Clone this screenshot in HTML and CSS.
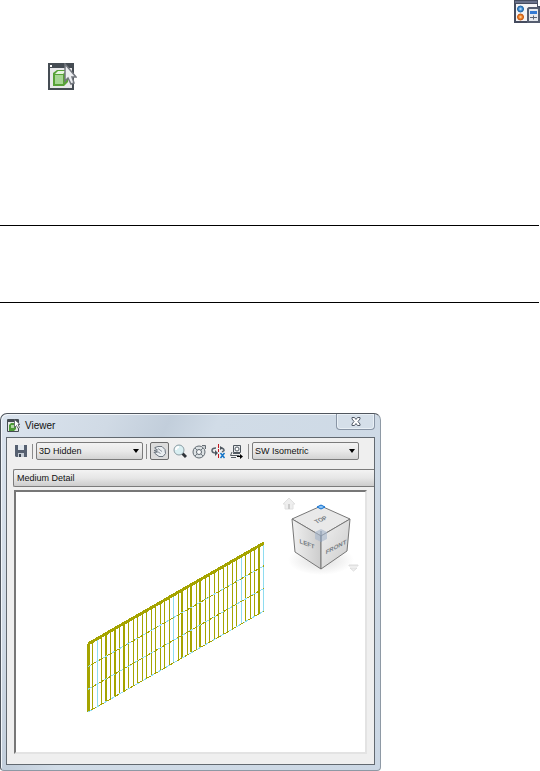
FILE: index.html
```
<!DOCTYPE html>
<html lang="en">
<head>
    <meta charset="UTF-8">
    <meta name="viewport" content="width=device-width, initial-scale=1.0">
    <title>Viewer</title>
    <link rel="stylesheet" href="styles.css">
</head>
<body>
    <div class="icon-row icon-row-right">
        <svg width="26" height="23" viewBox="0 0 26 23">
            <path d="M0 0h24v6h2v17H0z" fill="#454c5f"/>
            <rect x="1" y="1" width="22" height="2" fill="#69718a"/>
            <rect x="2" y="4" width="21" height="17" fill="#f4f4f6"/>
            <circle cx="6.500" cy="9" r="3" fill="#3f8fd8" stroke="#1f5f9c"/>
            <circle cx="6.500" cy="9" r="1.200" fill="#a8d0f2"/>
            <circle cx="6.500" cy="17" r="3" fill="#f08024" stroke="#c25410"/>
            <circle cx="6.500" cy="17" r="1.200" fill="#f9c48c"/>
            <path d="M15 8h9l1 1v13H14V9z" fill="#e6e9ee" stroke="#555d70" stroke-width="2"/>
            <rect x="16" y="11" width="7" height="3" fill="#3279d3"/>
            <path d="M16 17.500h7M19.500 15.500v4" stroke="#5c6475"/>
        </svg>
    </div>
    <div class="icon-row icon-row-left">
        <svg width="29" height="27" viewBox="0 0 29 27">
            <rect x="0" y="0" width="26" height="27" fill="#454c53"/>
            <rect x="2" y="2" width="2" height="2" fill="#fff"/>
            <rect x="2" y="5" width="22" height="20" fill="#e9e9eb"/>
            <path d="M5 10l4-3h11v12l-4 4H5z" fill="#58a237"/>
            <path d="M7 12h8v9H7z" fill="#a7d694"/>
            <path d="M7 11l3-3h8l-3 3z" fill="#e6f5df"/>
            <path d="M17 1v17l3-3 3 6 3-1-2-6h4z" fill="#eceef1" stroke="#74787f" stroke-width="1.500"/>
        </svg>
    </div>
    <hr class="rule">
    <hr class="rule rule-second">

    <div class="window">
        <div class="titlebar">
            <svg width="13" height="13" viewBox="0 0 13 13">
                <path d="M.5.500h11v12H.5z" fill="#e7ebe7" stroke="#454c53"/>
                <path d="M1 1h10v2H1z" fill="#454c53"/>
                <path d="M2 6l2-2h5v6l-2 2H2z" fill="#4d9b36"/>
                <path d="M4 6h3v3H4z" fill="#b1daa2"/>
                <path d="M7.500.500v8l2-2 1.500 3 1.500-1-1.500-3h2z" fill="#fff" stroke="#565b62" stroke-width=".8"/>
            </svg>
            <span class="title">Viewer</span>
            <button class="close" aria-label="Close">
                <svg width="10" height="9" viewBox="0 0 10 9">
                    <path d="M1 .5h2.500L5 2.500 6.500.500H9v1.500L7 4.500l2 2.500v1.500H6.500L5 6.500l-1.500 2H1V7l2-2.500L1 2z" fill="#fff" stroke="#535b68"/>
                </svg>
            </button>
        </div>

        <div class="client">
            <div class="toolbar">
                <button class="tool" aria-label="Save">
                    <svg width="12" height="12" viewBox="0 0 12 12">
                        <path d="M0 0h12v12H1l-1-1z" fill="#566070"/>
                        <path d="M3 0h6v5H3z" fill="#e1e7ed"/>
                        <path d="M3 8h6v4H3z" fill="#c7ced6"/>
                        <path d="M4 9h2v3H4z" fill="#3d4652"/>
                    </svg>
                </button>
                <span class="separator"></span>
                <div class="combo">
                    <select aria-label="Visual style">
                        <option>3D Hidden</option>
                    </select>
                </div>
                <span class="separator"></span>
                <button class="tool tool-active" aria-label="Pan">
                    <svg width="15" height="13" viewBox="0 0 15 13">
                        <path d="M3 2.500l3-1h4l3 3 .500 4-2.500 3H7L3 8.500 2 7.500l3.500-.5L2 5.500l3.500-.5L2.500 3z" fill="#e9edf0" stroke="#6c757f"/>
                        <path d="M6 3.500l4 3M5.500 6.500l3 2" stroke="#8b949d" fill="none"/>
                    </svg>
                </button>
                <button class="tool" aria-label="Zoom">
                    <svg width="14" height="15" viewBox="0 0 14 15">
                        <path d="M9 9l4 4" stroke="#30353a" stroke-width="3"/>
                        <circle cx="6" cy="6" r="5" fill="#d9eff2" stroke="#8b9ca3"/>
                        <path d="M3 6q0-3 3-3" stroke="#fff" stroke-width="2" fill="none"/>
                    </svg>
                </button>
                <button class="tool" aria-label="Steering wheel">
                    <svg width="15" height="15" viewBox="0 0 15 15">
                        <circle cx="7" cy="8" r="6" fill="#dde2e4" stroke="#626b72"/>
                        <path d="M3 4l2 2M11 4L9 6M3 12l2-2M11 12L9 10" stroke="#727b82"/>
                        <circle cx="7" cy="8" r="2.500" fill="#f7f8f9" stroke="#5d666e"/>
                        <path d="M10 1.500h3.500V5" fill="#c9ced2" stroke="#656d74"/>
                    </svg>
                </button>
                <button class="tool" aria-label="Orbit">
                    <svg width="15" height="15" viewBox="0 0 15 15">
                        <path d="M5 4Q1 4 1 6.500 1 9 5 9M9 4q4 0 4 2.500L11 8" fill="none" stroke="#59636c" stroke-width="1.500"/>
                        <path d="M4 6l3 3-3 3zM9 2v4l3-2z" fill="#4d565e"/>
                        <path d="M7.500 0v4M7.500 5v3M7.500 10v4" stroke="#c51720"/>
                        <path d="M9.500 9l4 5M13.500 9l-4 5" stroke="#1475c8" stroke-width="1.500"/>
                    </svg>
                </button>
                <button class="tool" aria-label="Camera">
                    <svg width="14" height="15" viewBox="0 0 14 15">
                        <path d="M3.500 1.500h7v7h-7z" fill="#e5e8ea" stroke="#4e565e"/>
                        <circle cx="7" cy="5" r="2" fill="#fff" stroke="#545d65"/>
                        <path d="M2 8L.5 11.500h9M3 9.500h7M1 13.500h5" fill="none" stroke="#545c63"/>
                        <path d="M7 12.500h5" stroke="#000"/>
                        <path d="M10 10l3 2.500L10 15z" fill="#000"/>
                    </svg>
                </button>
                <span class="separator"></span>
                <div class="combo">
                    <select aria-label="View">
                        <option>SW Isometric</option>
                    </select>
                </div>
            </div>

            <div class="detail">Medium Detail</div>

            <div class="viewport">
                <svg class="scene" viewBox="15 492 349 260">
                    <defs>
                        <linearGradient id="left" x2="1">
                            <stop offset="0" stop-color="#f0f0f0"/>
                            <stop offset="1" stop-color="#cccccc"/>
                        </linearGradient>
                        <linearGradient id="front" x2="1" y2="1">
                            <stop offset="0" stop-color="#f0f0f0"/>
                            <stop offset="1" stop-color="#cbcbcb"/>
                        </linearGradient>
                        <radialGradient id="shadow">
                            <stop offset="0" stop-color="#ddd"/>
                            <stop offset="1" stop-color="#fff"/>
                        </radialGradient>
                    </defs>

                    <!-- curtain wall panels -->
                    <g id="wall" fill="none" shape-rendering="crispEdges"></g>

                    <!-- home -->
                    <path d="M282 504l6-6 6 6h-2v5h-8v-5z" fill="#eee" stroke="#e0e0e0"/>
                    <path d="M287 504h2v5h-2z" fill="#ccc"/>

                    <!-- view cube -->
                    <ellipse cx="320" cy="560" rx="33" ry="15" fill="url(#shadow)"/>
                    <g stroke="#777" stroke-linejoin="round">
                        <path d="M291 519l29-13 29 13-29 17z" fill="#e9e9e9"/>
                        <path d="M291 519l29 17v33l-26-17z" fill="url(#left)"/>
                        <path d="M349 519l-29 17v33l26-18z" fill="url(#front)"/>
                    </g>
                    <path d="M314 532l6-3 6 3v7l-6 3-6-3z" fill="#a9b8cc" opacity=".65"/>
                    <path d="M320 531v11" stroke="#8090a5"/>
                    <path d="M316 507l4-2 4 2-4 2z" fill="#8cc4f5" stroke="#1270d0"/>
                    <g class="cube-text">
                        <text transform="translate(306 543) skewY(22)" y="3">LEFT</text>
                        <text transform="translate(335 546) skewY(-28)" y="3">FRONT</text>
                        <text transform="translate(319 519) rotate(-24) skewX(20)" y="3">TOP</text>
                    </g>

                    <path d="M348 565h9v1h-9zM349 568h7l-3.500 3z" fill="#eee" stroke="#ddd"/>
                </svg>
            </div>
        </div>
    </div>

<script>
    const wall = document.getElementById('wall');
    const left = 87, right = 262, top1 = 644, height = 68, rise = 101;
    const bays = 39;
    const thick = [4, 6, 8, 21, 23, 25, 38];
    const cyan = [2, 19, 34, 39];

    function line(d, color, width, dash) {
        const path = document.createElementNS('http://www.w3.org/2000/svg', 'path');
        path.setAttribute('d', d);
        path.setAttribute('stroke', color);
        path.setAttribute('stroke-width', width);
        if (dash) path.setAttribute('stroke-dasharray', dash);
        wall.appendChild(path);
    }

    // vertical mullions
    for (let i = 0; i <= bays; i++) {
        const x = Math.round(left + (right - left) * i / bays);
        const y = Math.round(top1 - rise * i / bays);
        const width = i === 0 ? 3 : thick.includes(i) ? 2 : 1;
        const middle = width === 2 ? x : x + 0.5;
        line(`M${middle} ${y}v${height}`, cyan.includes(i) ? '#8edcf0' : '#a5a400', width);
    }

    // rails
    for (let i = 0; i <= 3; i++) {
        const y = top1 + height * i / 3;
        const d = `M${left} ${y}L${right + 1} ${y - rise}`;
        line(d, '#a5a400', i === 0 ? 3 : 1);
        if (i > 0) line(d, '#8edcf0', 1, '4 5');
    }
</script>
</body>
</html>
```
FILE: styles.css
```
body {
    margin: 0;
    background: #fff;
    font-family: "Liberation Sans", Arial, sans-serif;
    font-size: 9px;
    color: #111;
}
svg {
    display: block;
    flex: none;
}
.icon-row {
    display: flex;
}
.icon-row-right {
    justify-content: flex-end;
}
.icon-row-left {
    padding: 40px 48px 0;
}
.rule {
    margin: 135px 1px 0 0;
    border: 0;
    border-top: 1px solid #000;
}
.rule-second {
    margin-top: 76px;
}

/* Window frame */
.window {
    box-sizing: border-box;
    max-width: 381px;
    margin-top: 110px;
    padding: 0 5px 5px;
    border: 1px solid #50565e;
    border-right-color: #8e99a5;
    border-bottom-color: #8e99a5;
    border-radius: 7px 7px 4px 4px;
    background: linear-gradient(115deg, #dbe4ee 0, #d0dae5 100px, #c2cedb 155px, #d1dce7 200px, #cbd7e4 100%);
    box-shadow: inset 1px 1px #f2f6fa;
}
.titlebar {
    display: flex;
    align-items: center;
    height: 23px;
    padding-left: 1px;
}
.title {
    flex: 1;
    padding-left: 5px;
    font-size: 10px;
}
.close {
    display: flex;
    align-self: flex-start;
    align-items: center;
    justify-content: center;
    width: 39px;
    height: 16px;
    padding: 0;
    border: 1px solid #8995a5;
    border-top: 0;
    border-radius: 0 0 4px 4px;
    background: #d5dfe9;
    box-shadow: inset 0 0 0 1px #e9f0f6;
}
.client {
    border: 1px solid #626970;
    background: #efefef;
}

/* Toolbar */
.toolbar {
    display: flex;
    align-items: center;
    gap: 3px;
    padding: 4px 6px 9px;
}
.tool {
    display: flex;
    align-items: center;
    justify-content: center;
    width: 16px;
    height: 18px;
    padding: 0;
    border: 0;
    background: none;
}
.tool-active {
    width: 19px;
    border: 1px solid #6b6b6b;
    border-radius: 2px;
    background: #dcdcdc;
}
.separator {
    width: 1px;
    height: 15px;
    background: #8b8b8b;
}
.combo {
    position: relative;
    flex: 0 1 107px;
}
.combo select {
    display: block;
    appearance: none;
    box-sizing: border-box;
    width: 100%;
    height: 18px;
    padding: 0 16px 0 2px;
    border: 1px solid #7b7b7b;
    border-radius: 2px;
    background: linear-gradient(#f3f3f3, #e9e9e9 50%, #d3d3d3);
    font: inherit;
    color: inherit;
}
.combo::after {
    content: "";
    position: absolute;
    top: 7px;
    right: 4px;
    border: 3px solid transparent;
    border-top: 4px solid #000;
    border-bottom: 0;
    pointer-events: none;
}
.detail {
    height: 16px;
    margin-left: 6px;
    padding-left: 3px;
    border: 1px solid #7b7b7b;
    border-right: 0;
    border-radius: 2px 0 0 2px;
    background: linear-gradient(#f3f3f3, #e6e6e6 50%, #cdcdcd);
    line-height: 16px;
}

/* 3D view */
.viewport {
    margin: 3px 7px 10px;
    border: 2px solid #777;
    border-right-color: #e3e3e3;
    border-bottom-color: #e3e3e3;
    background: #fff;
}
.scene {
    width: 100%;
}
.cube-text {
    font-size: 6px;
    font-weight: bold;
    text-anchor: middle;
    fill: #757c83;
}
```
